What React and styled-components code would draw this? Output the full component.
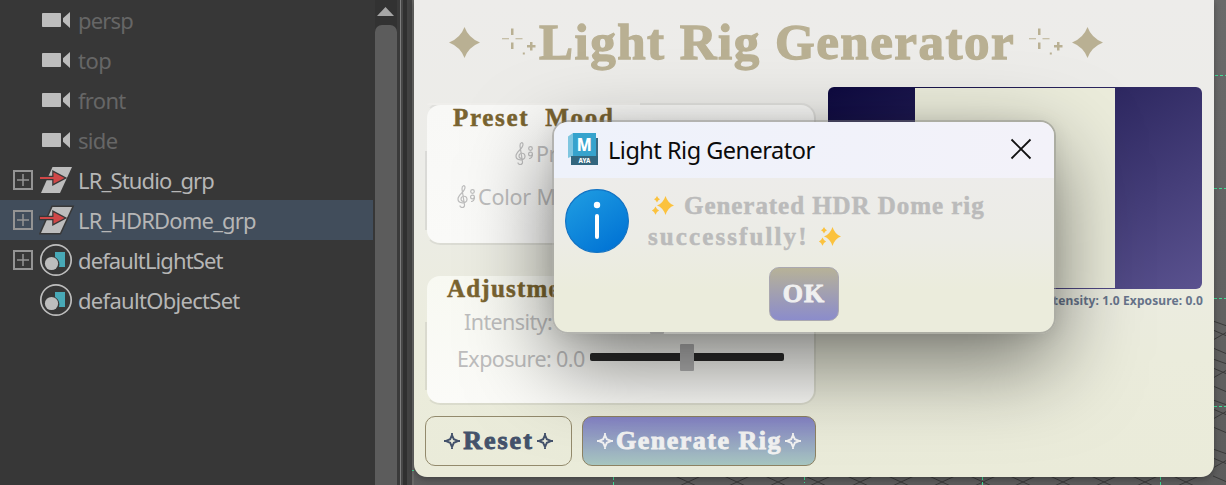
import React from "react";
import styled, { createGlobalStyle } from "styled-components";

const UI = `"Noto Sans", "Open Sans", sans-serif`;
const DISPLAY = `"Liberation Serif", "DejaVu Serif", serif`;

const Global = createGlobalStyle`
  * { box-sizing: border-box; }
  body { margin: 0; background: #666; overflow: hidden; font-family: ${UI}; }
`;

const Screen = styled.div`
  position: relative;
  display: flex;
  width: 1226px;
  height: 485px;
  overflow: hidden;
`;

/* ---------- outliner ---------- */
const Outliner = styled.div`
  width: 375px;
  background: #373737;
`;
const TreeRow = styled.div`
  display: flex;
  align-items: center;
  width: 373px;
  height: 40px;
  padding-left: 13px;
  background: ${(p) => (p.$selected ? "#414d5b" : "transparent")};
`;
const Expander = styled.div`
  width: 20px;
  height: 20px;
  margin-right: 6px;
  display: flex;
`;
const IconSlot = styled.div`
  width: 36px;
  height: 36px;
  margin-right: 3px;
  display: flex;
`;
const NodeName = styled.span`
  font-size: 22px;
  line-height: 30px;
  letter-spacing: ${(p) => p.$ls || 0}px;
  color: ${(p) => (p.$dim ? "#666666" : "#b6b6b6")};
  white-space: nowrap;
`;
const ScrollBar = styled.div`
  display: flex;
  flex-direction: column;
  width: 22px;
  background: #323232;
`;
const ScrollUp = styled.div`
  height: 25px;
  padding: 7px 0 0 2px;
  line-height: 0;
`;
const ScrollThumb = styled.div`
  flex: 1;
  border-radius: 7px 7px 0 0;
  background: #5c5c5c;
`;
const Splitter = styled.div`
  width: 17px;
  background: linear-gradient(90deg,
    #3a3a3a 0 3px, #7d7d7d 3px 4px, #474747 4px 6px, #303030 6px 10px,
    #434343 10px 15px, #686866 15px 17px);
`;

/* ---------- viewport and tool window ---------- */
const Viewport = styled.div`
  position: relative;
  flex: 1;
  background: linear-gradient(#6a6a6a, #5c5c5c);
`;
const GridLines = styled.svg`
  position: absolute;
  left: -2px;
  top: 0;
`;
const ToolWindow = styled.div`
  position: relative;
  width: 800px;
  height: 477px;
  border-radius: 0 0 13px 13px;
  background: linear-gradient(#edecea 0%, #ecece8 35%, #ebecdc 75%, #eaebd9 100%);
  box-shadow: 0 2px 6px rgba(0, 0, 0, 0.3);
`;
const TitleBar = styled.div`
  display: flex;
  align-items: center;
  height: 87px;
  padding: 0 0 3px 34px;
`;
const ToolTitle = styled.h1`
  margin: 0;
  width: 476px;
  font: bold 51px/60px ${DISPLAY};
  letter-spacing: 1.5px;
  color: #b9b093;
  -webkit-text-stroke: 1.3px #b9b093;
  white-space: nowrap;
`;
const Body = styled.div`
  display: flex;
  gap: 12px;
  padding-left: 11px;
`;
const Controls = styled.div`
  display: flex;
  flex-direction: column;
  width: 391px;
  padding-top: 16px;
`;
const Group = styled.section`
  position: relative;
  height: ${(p) => p.$h}px;
  margin-bottom: ${(p) => p.$gap}px;
  border: 2px solid rgba(120, 120, 120, 0.13);
  border-left-color: transparent;
  border-top-color: ${(p) => (p.$edge ? "rgba(120, 120, 120, 0.1)" : "transparent")};
  border-radius: 15px;
  background: linear-gradient(${(p) => p.$from}, ${(p) => p.$to});
  background-clip: padding-box;

  &::before {
    content: "";
    position: absolute;
    left: -2px;
    top: 46px;
    bottom: 13px;
    width: 2px;
    background: rgba(120, 120, 120, 0.15);
  }
  &::after {
    content: "";
    position: absolute;
    left: 0;
    top: -2px;
    width: 213px;
    height: 2px;
    border-radius: 15px 0 0 0;
    background: ${(p) => (p.$edge ? "#efeeeb" : "transparent")};
  }
`;
const Legend = styled.h2`
  margin: 0;
  padding: 0 0 0 ${(p) => p.$x}px;
  height: 26px;
  font: bold 25px/26px ${DISPLAY};
  letter-spacing: ${(p) => p.$ls}px;
  color: #7a6430;
  -webkit-text-stroke: 0.5px #7a6430;
  white-space: pre;
`;
const Field = styled.div`
  display: flex;
  align-items: center;
  height: 38px;
  margin-top: ${(p) => p.$top}px;
  padding-left: ${(p) => p.$x}px;
`;
const Label = styled.label`
  width: ${(p) => (p.$w ? p.$w + "px" : "auto")};
  font-size: 21.5px;
  line-height: 30px;
  letter-spacing: ${(p) => p.$ls || 0}px;
  color: #bdbdbd;
  white-space: nowrap;
`;
const Slider = styled.div`
  display: flex;
  justify-content: center;
  align-items: center;
  width: 194px;
  height: 8px;
  margin-bottom: 4px;
  border-radius: 2px;
  background: #2a2a2a;
`;
const Handle = styled.div`
  width: 14px;
  height: 27px;
  flex: none;
  border-radius: 1px;
  background: #b4b4b4;
`;
const Actions = styled.div`
  display: flex;
  gap: 10px;
`;
const Button = styled.button`
  display: flex;
  align-items: center;
  justify-content: center;
  gap: ${(p) => p.$gap || 0}px;
  width: ${(p) => p.$w}px;
  height: ${(p) => p.$h}px;
  padding: 0;
  border: 1px solid ${(p) => p.$line};
  border-radius: 10px;
  background: ${(p) => p.$bg};
  color: ${(p) => p.$fg};
  font: bold 26px/30px ${DISPLAY};
  letter-spacing: ${(p) => p.$ls}px;
  -webkit-text-stroke: 0.9px ${(p) => p.$fg};
  white-space: nowrap;
`;
const PreviewColumn = styled.div`
  width: 375px;
`;
const Preview = styled.div`
  display: flex;
  justify-content: center;
  width: 374px;
  padding: 1px 0;
  height: 202px;
  border-radius: 6px;
  background: linear-gradient(148deg, #0e0a40, #5a528f);
`;
const PreviewLight = styled.div`
  width: 200px;
  background: #ebecdb;
`;
const Status = styled.div`
  margin-top: 3px;
  text-align: right;
  font: bold 12px/18px ${UI};
  letter-spacing: ${(p) => p.$ls}px;
  color: #66738a;
  white-space: nowrap;
`;

/* ---------- message dialog ---------- */
const Dialog = styled.div`
  position: absolute;
  left: 552px;
  top: 120px;
  width: 504px;
  height: 214px;
  border: 2px solid rgba(110, 110, 105, 0.5);
  border-radius: 16px;
  background: linear-gradient(#edecea 26%, #ecece6 55%, #ebecdc 80%);
  background-clip: padding-box;
  box-shadow: 0 30px 84px rgba(0, 0, 0, 0.5), 0 2px 20px rgba(0, 0, 0, 0.08);
`;
const DialogBar = styled.div`
  display: flex;
  align-items: center;
  height: 56px;
  padding: 0 22px 2px 14px;
  border-radius: 14px 14px 0 0;
  background: linear-gradient(90deg, #eef2fb, #f3f2f9);
`;
const DialogTitle = styled.div`
  flex: 1;
  padding: 2px 0 0 10px;
  font-size: 23.5px;
  line-height: 32px;
  letter-spacing: ${(p) => p.$ls}px;
  color: #0b0b0b;
`;
const DialogBody = styled.div`
  display: flex;
  padding: 10px 0 0 10px;
`;
const Message = styled.div`
  padding: 2px 0 0 18px;
  font: bold 25px/31px ${DISPLAY};
  color: #bbbbbb;
  -webkit-text-stroke: 0.5px #bbbbbb;
`;
const Line = styled.div`
  display: flex;
  align-items: center;
  height: 31px;
  gap: 9px;
  padding-left: ${(p) => p.$x || 0}px;
  letter-spacing: ${(p) => p.$ls}px;
  white-space: nowrap;
`;
const DialogActions = styled.div`
  display: flex;
  padding: 13px 0 0 215px;
`;

/* ---------- icons ---------- */
const Camera = () => (
  <svg width="36" height="36" viewBox="0 0 36 36" fill="#bdbdbd">
    <rect x="3" y="11" width="19" height="14" rx=".8" />
    <path d="M31 10v16l-7-6.2v-3.6z" />
  </svg>
);
const Transform = () => (
  <svg width="36" height="36" viewBox="0 0 36 36">
    <path d="M13.500 5H33L21 31H2z" fill="#bdbdbd" stroke="#383838" strokeWidth="3" paintOrder="stroke" />
    <path d="M1 15h13.500v-4.800l11 5.800-11 5.800V17H1z" fill="#d04747" stroke="#383838" strokeWidth="2.600" paintOrder="stroke" />
  </svg>
);
const SetIcon = () => (
  <svg width="36" height="36" viewBox="0 0 36 36">
    <circle cx="17" cy="18" r="15.200" fill="none" stroke="#bdbdbd" strokeWidth="1.700" />
    <path d="M16 10h10v15h-6a9 9 0 0 0-4-10z" fill="#48a9b7" />
    <circle cx="12.500" cy="21.500" r="6.600" fill="#bdbdbd" />
  </svg>
);
const Plus = () => (
  <svg width="20" height="20" viewBox="0 0 20 20" fill="none" stroke="#949494">
    <rect x="1" y="1" width="18" height="18" strokeWidth="2" />
    <path d="M4 10h12M10 4v12" strokeWidth="1.500" />
  </svg>
);
const Star = () => (
  <svg width="33" height="33" viewBox="0 0 33 33" fill="#b9b093">
    <path d="M16.500 1Q20.500 12 32 16.500 20.500 21 16.500 32 12.500 21 1 16.500 12.500 12 16.500 1z" />
  </svg>
);
const Twinkle = () => (
  <svg width="34" height="30" viewBox="0 0 34 30" fill="#b9b093">
    <path d="M0 11.200h7v1H0zM13.500 11.200h7v1h-7zM9 1.500h2.500V8H9zM9 15.500h2.500V22H9z" />
    <path d="M25 18h3v-3h2.500v3h3v2.500h-3v3H28v-3h-3zM20.800 25.500h2v2h-2z" />
  </svg>
);
const Diamond = () => (
  <svg width="16" height="16" viewBox="0 0 16 16" fill="none" stroke="currentColor" strokeWidth="1.900">
    <path d="M8 2L9.800 6.200 14 8 9.800 9.800 8 14 6.200 9.800 2 8 6.200 6.200zM0 8h3M13 8h3M8 0v3M8 13v3" />
  </svg>
);
const Clef = () => (
  <svg width="21" height="26" viewBox="0 0 21 26" fill="none" stroke="#bdbdbd" strokeWidth="1.200">
    <path d="M3 21.500c0 3 5 2.500 4.500-.5L5 5C4.800 1.500 8 .5 8 3.500 8 8 1 10.500 1 15c0 5 9 5 9 .5C10 11 4 11.500 4 15c0 1.500 1 2.500 2.500 2.300" />
    <circle cx="15.500" cy="7.500" r="1.800" />
    <circle cx="15.500" cy="13" r="1.900" />
    <path d="M17.400 13c0 3-.8 4.500-3.400 4.500" />
  </svg>
);
const Sparkles = () => (
  <svg width="24" height="22" viewBox="0 0 24 22" fill="#fbc23e">
    <path d="M14.500 1Q17 8.500 23 10.500 17 12.500 14.500 20 12 12.500 6 10.500 12 8.500 14.500 1zM6 1q.9 2.400 3 3.200-2.100.800-3 3.200-.9-2.400-3-3.200 2.100-.8 3-3.200zM4.500 11.500q1.200 3 3.600 4.100-2.400 1.100-3.600 4.200-1.200-3.100-3.600-4.200 2.400-1.100 3.600-4.100z" />
  </svg>
);
const MayaText = styled.text`
  font-family: ${UI};
  font-weight: 800;
  fill: #fff;
`;
const Maya = () => (
  <svg width="30" height="32" viewBox="0 0 30 32">
    <path d="M3 23h25V5h2v27H3z" fill="#3a6d85" />
    <path d="M0 3.500L5 0v23l-5 2z" fill="#7fc6e0" />
    <path d="M5 0h23v23H5z" fill="#36a3cd" />
    <path d="M3 23h27v9H3z" fill="#32667e" />
    <MayaText x="8.800" y="17.500" fontSize="17" textLength="15" lengthAdjust="spacingAndGlyphs">M</MayaText>
    <MayaText x="10.500" y="30" fontSize="7.500" textLength="12" lengthAdjust="spacingAndGlyphs">AYA</MayaText>
  </svg>
);
const Info = () => (
  <svg width="66" height="66" viewBox="0 0 66 66">
    <defs>
      <linearGradient id="info" x1="0.100" y1="0" x2="0.800" y2="1">
        <stop offset="0" stopColor="#1f9de2" />
        <stop offset="1" stopColor="#0072d4" />
      </linearGradient>
    </defs>
    <circle cx="33" cy="33" r="31.400" fill="url(#info)" stroke="#1273c4" strokeWidth="1.200" />
    <circle cx="33" cy="17" r="3.200" fill="#fff" />
    <rect x="31" y="26" width="4" height="25" rx="2" fill="#fff" />
  </svg>
);
const Close = () => (
  <svg width="22" height="22" viewBox="0 0 22 22" stroke="#111" strokeWidth="1.800">
    <path d="M1.500 1.500l19 19M20.500 1.500l-19 19" />
  </svg>
);

const nodes = [
  { name: "persp", icon: Camera, dim: true, ls: -0.8 },
  { name: "top", icon: Camera, dim: true, ls: -0.5 },
  { name: "front", icon: Camera, dim: true, ls: -0.7 },
  { name: "side", icon: Camera, dim: true, ls: -0.7 },
  { name: "LR_Studio_grp", icon: Transform, open: true, ls: -0.85 },
  { name: "LR_HDRDome_grp", icon: Transform, open: true, selected: true, ls: -0.82 },
  { name: "defaultLightSet", icon: SetIcon, open: true, ls: -0.88 },
  { name: "defaultObjectSet", icon: SetIcon, ls: -0.7 },
];

const bottomCrossings = [688, 737, 778, 818, 860, 901, 942, 983, 1023, 1063, 1104, 1145, 1186];
const sideCrossings = [334, 372, 413, 462];

export default function App() {
  return (
    <>
      <Global />
      <Screen>
        <Outliner>
          {nodes.map(({ name, icon: Icon, dim, open, selected, ls }) => (
            <TreeRow key={name} $selected={selected}>
              <Expander>{open && <Plus />}</Expander>
              <IconSlot><Icon /></IconSlot>
              <NodeName $dim={dim} $ls={ls}>{name}</NodeName>
            </TreeRow>
          ))}
        </Outliner>
        <ScrollBar>
          <ScrollUp>
            <svg width="17" height="9" viewBox="0 0 17 9"><path d="M8.500 0L17 9H0z" fill="#a6a6a6" /></svg>
          </ScrollUp>
          <ScrollThumb />
        </ScrollBar>
        <Splitter />
        <Viewport>
          <GridLines width="814" height="485" viewBox="412 0 814 485" fill="none">
            <g stroke="#3a3a3a" strokeWidth="1">
              {bottomCrossings.map((x) => (
                <path key={x} d={`M${x - 13} 476l26 12M${x + 13} 476l-26 12`} />
              ))}
              {sideCrossings.map((y) => (
                <path key={y} d={`M1213 ${y - 4}l14 6M1213 ${y + 6}l14 -8M1213 ${y - 13}l14 5M1213 ${y + 14}l14 6`} />
              ))}
            </g>
            <path d="M1215 75.500h11M1214 188.500h12M1214 298.500h12M1214 406.500h12M613.500 477v8M804.500 477v6M982.500 477v8M1160.500 477v8M412 470.500h2" stroke="#3fdc94" strokeDasharray="3 2" />
          </GridLines>
          <ToolWindow>
            <TitleBar>
              <Star />
              <svg width="21" height="1" />
              <Twinkle />
              <svg width="3" height="1" />
              <ToolTitle>Light Rig Generator</ToolTitle>
              <svg width="14" height="1" />
              <Twinkle />
              <svg width="8" height="1" />
              <Star />
            </TitleBar>
            <Body>
              <Controls>
                <Group $h={142} $gap={29} $edge $from="#f8f8f6" $to="#fafaf8">
                  <Legend $x={26} $ls={1.7}>Preset  Mood</Legend>
                  <Field $x={88} $top={4}><Clef /><Label $ls={-0.4}>Preset:</Label></Field>
                  <Field $x={30} $top={5}><Clef /><Label $ls={-0.2}>Color Mood:</Label></Field>
                </Group>
                <Group $h={131} $gap={11} $from="#f8f9f2" $to="#fbfbf8">
                  <Legend $x={20} $ls={1.2}>Adjustments</Legend>
                  <Field $x={37} $top={1}>
                    <Label $w={96} $ls={-0.6}>Intensity: 1.0</Label>
                    <Slider><Handle /></Slider>
                  </Field>
                  <Field $x={30} $top={-1}>
                    <Label $w={133} $ls={-0.6}>Exposure: 0.0</Label>
                    <Slider><Handle /></Slider>
                  </Field>
                </Group>
                <Actions>
                  <Button $w={147} $h={50} $ls={2} $gap={3} $line="#938a6c" $bg="transparent" $fg="#44526b">
                    <Diamond />Reset<Diamond />
                  </Button>
                  <Button $w={234} $h={50} $ls={1.5} $gap={3} $line="#8d8262" $bg="linear-gradient(#8583c6, #a7c6c0)" $fg="#f2f2f2">
                    <Diamond />Generate Rig<Diamond />
                  </Button>
                </Actions>
              </Controls>
              <PreviewColumn>
                <Preview><PreviewLight /></Preview>
                <Status $ls={0.12}>Intensity: 1.0 Exposure: 0.0</Status>
              </PreviewColumn>
            </Body>
          </ToolWindow>
        </Viewport>
        <Dialog>
          <DialogBar>
            <Maya />
            <DialogTitle $ls={-0.5}>Light Rig Generator</DialogTitle>
            <Close />
          </DialogBar>
          <DialogBody>
            <Info />
            <Message>
              <Line $x={3} $ls={0.95}><Sparkles />Generated HDR Dome rig</Line>
              <Line $ls={2.1}>successfully!<Sparkles /></Line>
            </Message>
          </DialogBody>
          <DialogActions>
            <Button $w={70} $h={54} $ls={1} $line="#aaa8b0" $bg="linear-gradient(#b7b298, #8b8ccb)" $fg="#f0f0f0">OK</Button>
          </DialogActions>
        </Dialog>
      </Screen>
    </>
  );
}
